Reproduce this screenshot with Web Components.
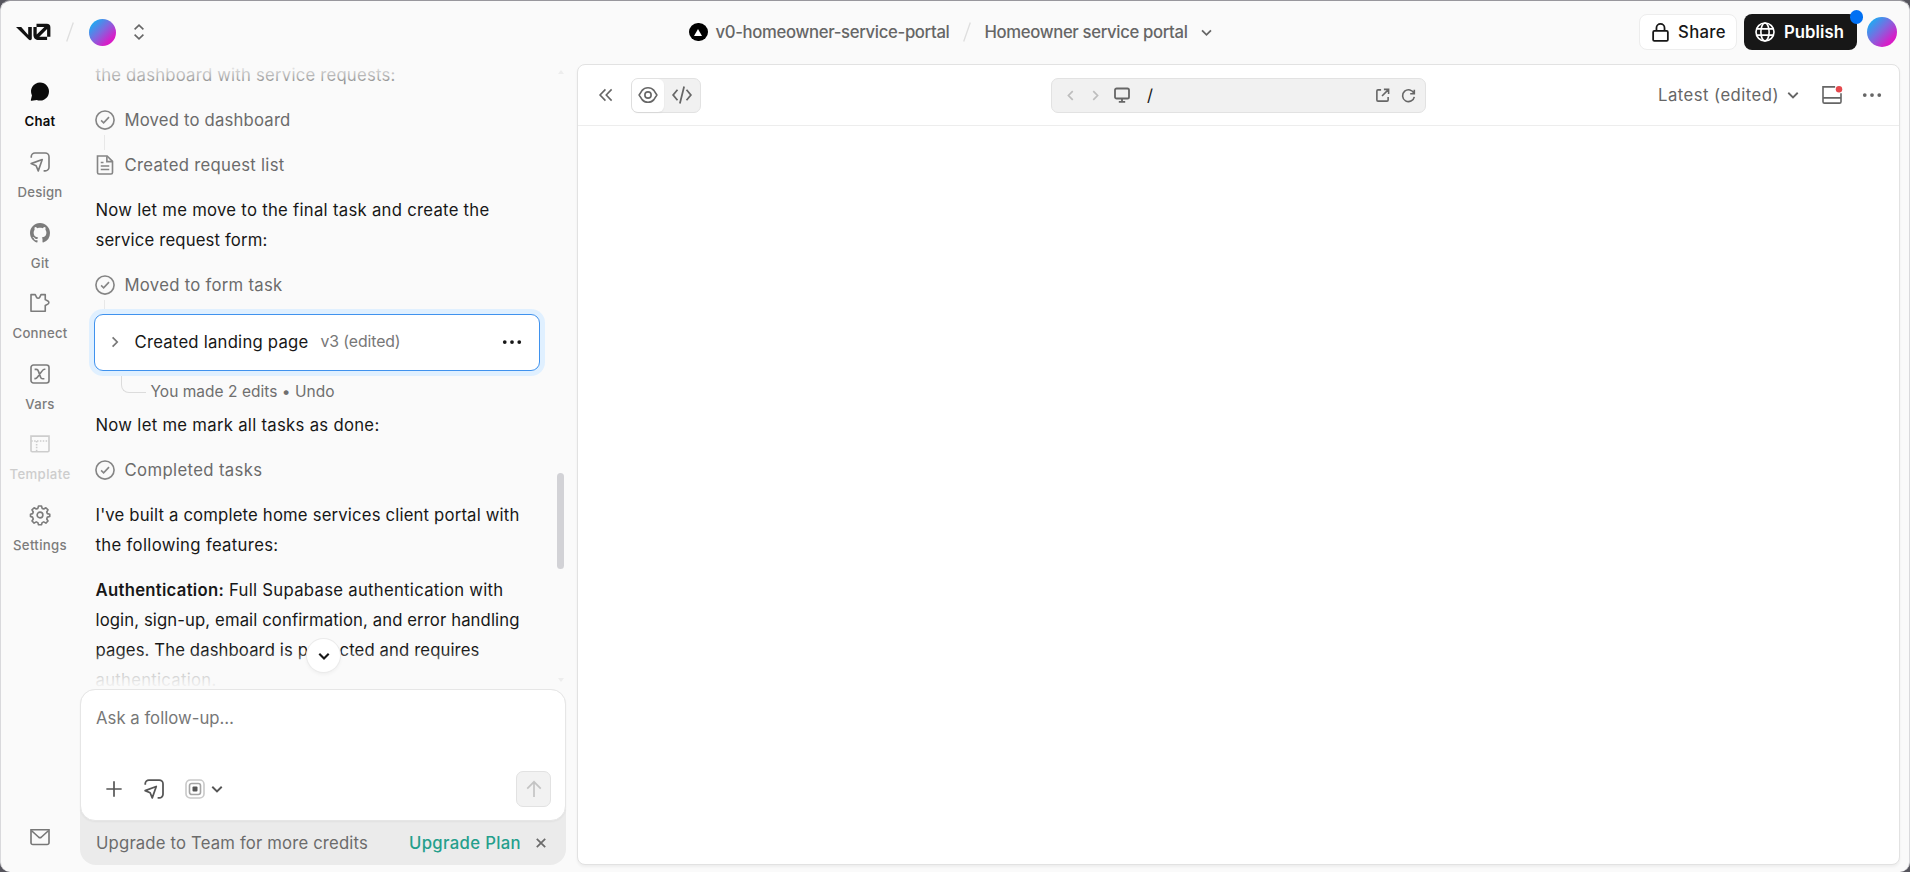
<!DOCTYPE html>
<html lang="en">
<head>
<meta charset="utf-8">
<title>Homeowner service portal</title>
<style>
  html { background: #56555d; }
  body {
    margin: 0;
    width: 1910px;
    height: 872px;
    overflow: hidden;
    font-family: Inter, "Liberation Sans", sans-serif;
    font-size: 16.7px;
    color: #171717;
  }
</style>
</head>
<body>
<app-shell>
  <top-bar slot="header"></top-bar>
  <side-nav slot="nav"></side-nav>
  <chat-thread slot="chat"></chat-thread>
  <prompt-box slot="prompt"></prompt-box>
  <preview-panel slot="preview"></preview-panel>
</app-shell>

<script>
/* ------------------------------------------------------------------ */
/*  Icons                                                              */
/* ------------------------------------------------------------------ */

const ICONS = {
  chat: '<path fill="currentColor" stroke="none" d="M8.200.4a7.400 7.400 0 1 1-2.700 14.300l-4.100.7a.6.6 0 0 1-.7-.7l.9-3.600A7.400 7.400 0 0 1 8.200.4z"/>',
  design: '<path d="M1 4.6V3.7A3 3 0 0 1 4 .8h8.2a3 3 0 0 1 3 3v8.3a3 3 0 0 1-3 3h-1.3"/><path d="M.9 9.3 9.8 6 6.6 15.1 4.9 11z" stroke-linejoin="round"/>',
  github: '<path fill="currentColor" stroke="none" d="M8 0C3.58 0 0 3.58 0 8c0 3.54 2.29 6.53 5.47 7.59.4.07.55-.17.55-.38 0-.19-.01-.82-.01-1.49-2.01.37-2.53-.49-2.69-.94-.09-.23-.48-.94-.82-1.13-.28-.15-.68-.52-.01-.53.63-.01 1.08.58 1.23.82.72 1.21 1.87.87 2.33.66.07-.52.28-.87.51-1.07-1.78-.2-3.64-.89-3.64-3.95 0-.87.31-1.59.82-2.15-.08-.2-.36-1.02.08-2.12 0 0 .67-.21 2.2.82.64-.18 1.32-.27 2-.27s1.36.09 2 .27c1.53-1.04 2.2-.82 2.2-.82.44 1.1.16 1.92.08 2.12.51.56.82 1.27.82 2.15 0 3.07-1.87 3.75-3.65 3.95.29.25.54.73.54 1.48 0 1.07-.01 1.93-.01 2.2 0 .21.15.46.55.38A8.01 8.01 0 0 0 16 8c0-4.42-3.58-8-8-8z"/>',
  puzzle: '<path d="M.8 1.3h3.4l1 2.1a1.5 1.5 0 0 0 2.6 0l1-2.1h3.4v4l2.1 1.1a1.4 1.4 0 0 1 0 2.5l-2.1 1.1v4.6H.8z" stroke-linejoin="round"/>',
  vars: '<rect x=".8" y=".8" width="14.4" height="14.4" rx="2"/><path d="M3.7 4.3h1.4c1 0 1.3.5 1.6 1.4l1.7 4.7c.3.9.7 1.4 1.6 1.4h1.5M12.3 4.2h-.6c-.8 0-1.3.4-1.8 1.1l-4 5.3c-.5.7-1 1.1-1.8 1.1h-.6"/>',
  template: '<path d="M.8 1.7h14.4v11.5a1 1 0 0 1-1 1H1.8a1 1 0 0 1-1-1z"/><path d="M1 5.6h14M5.3 5.6v8.5" stroke-dasharray="1.2 1.1"/>',
  gear: '<circle cx="8" cy="8" r="2.3"/><path stroke-linejoin="round" d="M6.8.8h2.4l.5 1.9 1.3.5 1.7-1 1.7 1.7-1 1.7.5 1.3 1.9.5v1.8l-1.9.5-.5 1.5 1 1.6-1.7 1.7-1.7-1-1.3.6-.5 1.7H6.8l-.5-1.7-1.3-.6-1.7 1-1.7-1.7 1-1.6-.6-1.5L.4 9.2V7.4l1.7-.5.5-1.3-1-1.7 1.7-1.7 1.7 1 1.3-.5z"/>',
  mail: '<path d="M.8 2.2h14.4v10.3a1.5 1.5 0 0 1-1.5 1.5H2.3a1.5 1.5 0 0 1-1.5-1.5z"/><path d="m1.3 3 5.7 5.2q1 .8 2 0L14.7 3"/>',
  check: '<circle cx="8" cy="8" r="7.25"/><path d="m4.9 8.3 2 1.9 4.3-4.5"/>',
  file: '<path d="M2 .8h7.7L14 5.100v8.900a1.200 1.200 0 0 1-1.200 1.200H3.200A1.200 1.200 0 0 1 2 14z"/><path d="M9.500 1v4.300H14M4.600 6h2.200M4.600 8.800h6.800M4.600 11.600h6.800"/>',
  right: '<path d="m5.6 3.4 4.6 4.6-4.6 4.6"/>',
  left: '<path d="m10.4 3.4-4.6 4.6 4.6 4.6"/>',
  down: '<path d="m3.8 6 4.2 4.2L12.2 6"/>',
  updown: '<path d="M3.600 5.400 8 1.100l4.400 4.300M3.600 10.600 8 14.900l4.400-4.300"/>',
  collapse: '<path d="M7.500 3 2.700 8l4.800 5M13 3 8.200 8l4.800 5"/>',
  dots: '<g fill="currentColor" stroke="none"><circle cx="2.200" cy="8" r="1.500"/><circle cx="8" cy="8" r="1.500"/><circle cx="13.800" cy="8" r="1.500"/></g>',
  plus: '<path d="M8 1.200v13.600M1.200 8h13.600"/>',
  model: '<g stroke="#c9c9c9"><rect x=".8" y=".8" width="14.400" height="14.400" rx="3.400"/><rect x="3.600" y="3.600" width="8.800" height="8.800" rx="1.800" stroke="#a5a5a5"/></g><rect x="6" y="6" width="4" height="4" rx=".8" fill="#555" stroke="none"/>',
  arrowup: '<path d="M8 15V1.600M2 7.600l6-6 6 6"/>',
  close: '<path d="m3.200 3.200 9.600 9.600M12.800 3.200l-9.600 9.600"/>',
  lock: '<rect x="1.800" y="6.700" width="12.400" height="8.400" rx="1"/><path d="M4.600 6.700V4.200a3.400 3.400 0 0 1 6.800 0v2.500"/>',
  globe: '<circle cx="8" cy="8" r="7.200"/><ellipse cx="8" cy="8" rx="3.300" ry="7.200"/><path d="M1.500 5.500h13M1.500 10.500h13"/>',
  eye: '<circle cx="8" cy="8" r="2.500"/><path stroke-linejoin="round" d="M.9 8 3.300 4.300Q5 2.200 8 2.200t4.700 2.100L15.100 8l-2.400 3.700Q11 13.800 8 13.800t-4.700-2.100z"/>',
  code: '<path d="M4.400 3.800.9 8l3.500 4.200M11.600 3.800 15.100 8l-3.500 4.200M9.700 1.200 6.300 14.800"/>',
  desktop: '<rect x="1" y="1.500" width="14" height="10" rx="1.600"/><path d="M8 11.500v3.300M4.800 14.800h6.400"/>',
  external: '<path d="M6.500 2H3.200A1.200 1.200 0 0 0 2 3.200v9.600A1.200 1.200 0 0 0 3.200 14h9.600a1.200 1.200 0 0 0 1.200-1.200V9.500M9.500 1.500h5v5M14 2 7.500 8.500"/>',
  refresh: '<path d="M14.200 1.800v4.400H9.800M13.900 6a6.300 6.300 0 1 0 .3 3.400"/>',
  panel: '<path d="M10.500 1.500H.8v11.800a1.200 1.200 0 0 0 1.200 1.200h12a1.200 1.200 0 0 0 1.200-1.200V6.500M.8 10.300h14.400"/><circle cx="13.600" cy="3.300" r="2.600" fill="#e5484d" stroke="none"/>',
};

class AppIcon extends HTMLElement {
  connectedCallback() {
    const size = this.getAttribute('size') || 20;
    const weight = this.getAttribute('weight') || 1.3;
    this.attachShadow({ mode: 'open' }).innerHTML = `
      <style>
        :host { display: block; flex: none; width: ${size}px; height: ${size}px; }
        svg { display: block; overflow: visible; }
      </style>
      <svg width="${size}" height="${size}" viewBox="0 0 16 16" fill="none"
        stroke="currentColor" stroke-width="${weight}">${ICONS[this.getAttribute('name')]}</svg>
    `;
  }
}

/* ------------------------------------------------------------------ */
/*  Small pieces                                                       */
/* ------------------------------------------------------------------ */

/** <fit-text width="120"> — one line of text, tracked to a set width. */
class FitText extends HTMLElement {
  connectedCallback() {
    if (this.shadowRoot) return;
    this.attachShadow({ mode: 'open' }).innerHTML = `
      <style>
        :host { display: block; width: max-content; white-space: nowrap; }
      </style>
      <slot></slot>
    `;
    const target = parseFloat(this.getAttribute('width'));
    const natural = this.getBoundingClientRect().width;
    if (target && natural) {
      this.style.letterSpacing = ((target - natural) / this.textContent.length).toFixed(3) + 'px';
    }
  }
}

class UserAvatar extends HTMLElement {
  connectedCallback() {
    this.attachShadow({ mode: 'open' }).innerHTML = `
      <style>
        :host {
          display: block;
          flex: none;
          border-radius: 50%;
          background: linear-gradient(135deg, #10b4f5 8%, #7b6be0 45%, #d61fc8 78%, #e010c0);
        }
      </style>
    `;
  }
}

class CrumbSlash extends HTMLElement {
  connectedCallback() {
    this.attachShadow({ mode: 'open' }).innerHTML = `
      <style>:host { display: block; width: 8px; height: 20px; } svg { display: block; }</style>
      <svg width="8" height="20"><path d="M7.300.5.700 19.500" stroke="#dedede" stroke-width="1.300"/></svg>
    `;
  }
}

class NavItem extends HTMLElement {
  connectedCallback() {
    this.attachShadow({ mode: 'open' }).innerHTML = `
      <style>
        :host {
          display: flex;
          flex-direction: column;
          align-items: center;
          height: 70.6px;
          color: #7c7c7c;
          font-size: 13.2px;
          font-weight: 500;
          line-height: 18px;
        }
        :host([active]) { color: #0a0a0a; font-weight: 600; }
        :host([disabled]) { color: #cdcdcd; }
        app-icon { margin-bottom: 11px; }
      </style>
      <app-icon name="${this.getAttribute('icon')}" size="${this.getAttribute('size') || 20}"></app-icon>
      <slot></slot>
    `;
  }
}

class TaskRow extends HTMLElement {
  connectedCallback() {
    this.attachShadow({ mode: 'open' }).innerHTML = `
      <style>
        :host {
          display: flex;
          align-items: center;
          gap: 10px;
          height: 30px;
          position: relative;
          color: #6b6b6b;
        }
        app-icon { color: #858585; margin-left: -1px; }
        :host([linked])::after {
          content: "";
          position: absolute;
          left: 8px;
          top: 30px;
          width: 1.5px;
          height: 15px;
          background: #e8e8e8;
        }
      </style>
      <app-icon name="${this.getAttribute('icon')}" size="20" weight="1.3"></app-icon>
      <slot></slot>
    `;
  }
}

/* ------------------------------------------------------------------ */
/*  Header                                                             */
/* ------------------------------------------------------------------ */

class TopBar extends HTMLElement {
  connectedCallback() {
    this.attachShadow({ mode: 'open' }).innerHTML = `
      <style>
        :host {
          display: grid;
          grid-template-columns: 688px 1fr auto;
          align-items: center;
          height: 62px;
          color: #666;
          font-weight: 500;
        }
        .group { display: flex; align-items: center; }
        fit-text { margin-top: -1px; }
        .logo { display: block; margin: 0 15px 0 15px; }
        .org { width: 27px; height: 27px; margin: 0 15px 0 15px; }
        .team {
          display: grid;
          place-items: center;
          width: 18.5px;
          height: 18.5px;
          border-radius: 50%;
          background: #000;
          margin-right: 8px;
        }
        crumb-slash { margin: 0 14px 0 13px; }
        .actions { padding-right: 12px; gap: 7px; }
        .btn {
          box-sizing: border-box;
          height: 36px;
          display: flex;
          align-items: center;
          gap: 9px;
          border-radius: 8px;
        }
        .share {
          width: 98px;
          padding-left: 11px;
          gap: 8px;
          background: #fff;
          border: 1px solid #ededed;
          color: #171717;
        }
        .publish {
          position: relative;
          width: 113px;
          padding-left: 11px;
          background: #171717;
          color: #fff;
          font-weight: 600;
        }
        .publish::after {
          content: "";
          position: absolute;
          right: -6px;
          top: -4px;
          width: 13.5px;
          height: 13.5px;
          border-radius: 50%;
          background: #0070f3;
        }
        .me { width: 30px; height: 30px; margin-left: 3px; }
      </style>
      <div class="group">
        <svg class="logo" width="35" height="18" viewBox="0 0 35 18" fill="#111">
          <path d="M0 4h5.2l7 8V4h3.6v11.5c0 1.7-2 2.3-3.1 1.1z"/>
          <path d="M20.500.8h10.300a3.600 3.600 0 0 1 3.600 3.600v9.400h-3.300V5.900l-7.800 7.900h7.800V17h-8.400c-3.100 0-5.300-2-5.300-5V4h3.300v7.600l7.700-7.600h-7.900z"/>
        </svg>
        <crumb-slash style="margin:0"></crumb-slash>
        <user-avatar class="org"></user-avatar>
        <app-icon name="updown" size="16" weight="1.6"></app-icon>
      </div>
      <div class="group">
        <span class="team"><svg width="8" height="7"><path d="M4 0l4 7H0z" fill="#fff"/></svg></span>
        <fit-text width="234">v0-homeowner-service-portal</fit-text>
        <crumb-slash></crumb-slash>
        <fit-text width="203">Homeowner service portal</fit-text>
        <app-icon name="down" size="17" weight="1.7" style="margin-left:10px"></app-icon>
      </div>
      <div class="group actions">
        <div class="btn share">
          <app-icon name="lock" size="19" weight="1.5"></app-icon>
          <fit-text width="48">Share</fit-text>
        </div>
        <div class="btn publish">
          <app-icon name="globe" size="20"></app-icon>
          <fit-text width="60">Publish</fit-text>
        </div>
        <user-avatar class="me"></user-avatar>
      </div>
    `;
  }
}

/* ------------------------------------------------------------------ */
/*  Side navigation                                                    */
/* ------------------------------------------------------------------ */

class SideNav extends HTMLElement {
  connectedCallback() {
    this.attachShadow({ mode: 'open' }).innerHTML = `
      <style>
        :host {
          display: flex;
          flex-direction: column;
          width: 78px;
          height: 100%;
          box-sizing: border-box;
          padding: 17.5px 0 25px;
        }
        .mail { margin: auto auto 0 29px; color: #777; }
      </style>
      <nav-item icon="chat" active size="19.5"><fit-text width="31">Chat</fit-text></nav-item>
      <nav-item icon="design"><fit-text width="45">Design</fit-text></nav-item>
      <nav-item icon="github"><fit-text width="18.5">Git</fit-text></nav-item>
      <nav-item icon="puzzle"><fit-text width="55">Connect</fit-text></nav-item>
      <nav-item icon="vars"><fit-text width="29.5">Vars</fit-text></nav-item>
      <nav-item icon="template" disabled><fit-text width="61">Template</fit-text></nav-item>
      <nav-item icon="gear"><fit-text width="54">Settings</fit-text></nav-item>
      <app-icon class="mail" name="mail" size="20"></app-icon>
    `;
  }
}

/* ------------------------------------------------------------------ */
/*  Chat                                                               */
/* ------------------------------------------------------------------ */

class VersionCard extends HTMLElement {
  connectedCallback() {
    this.attachShadow({ mode: 'open' }).innerHTML = `
      <style>
        :host {
          box-sizing: border-box;
          display: flex;
          align-items: center;
          width: 446px;
          height: 57px;
          margin-left: -2px;
          padding: 0 17px 0 12px;
          border: 1.5px solid #3f92ee;
          border-radius: 9px;
          background: #fff;
          box-shadow: 0 0 0 5px #e0f0ff;
          position: relative;
          z-index: 1;
        }
        .chev { color: #777; margin-right: 12px; }
        .version { color: #777; font-size: 15.8px; margin-left: 12px; }
        .more { margin-left: auto; }
      </style>
      <app-icon class="chev" name="right" size="16" weight="1.7"></app-icon>
      <slot></slot>
      <span class="version"><slot name="version"></slot></span>
      <app-icon class="more" name="dots" size="20"></app-icon>
    `;
  }
}

class ChatThread extends HTMLElement {
  connectedCallback() {
    this.attachShadow({ mode: 'open' }).innerHTML = `
      <style>
        :host {
          display: block;
          position: relative;
          height: 625px;
          overflow: hidden;
          line-height: 30px;
        }
        .log {
          display: flex;
          flex-direction: column;
          gap: 15px;
          padding-left: 15.5px;
          margin-top: -4px;
        }
        b { font-weight: 600; }
        .edits {
          display: flex;
          align-items: center;
          height: 24px;
          margin: -6px 0 -9px;
          font-size: 15.5px;
          color: #6f6f6f;
        }
        .elbow {
          box-sizing: border-box;
          width: 25px;
          height: 24px;
          margin: -22px 5px 0 25px;
          border: solid #dcdcdc;
          border-width: 0 0 1.5px 1.5px;
          border-bottom-left-radius: 8px;
        }
        .fade {
          position: absolute;
          left: 0;
          right: 0;
          height: 39px;
        }
        .fade.top { top: 0; background: linear-gradient(#fafafaff, #fafafa00); }
        .fade.bottom { bottom: 0; background: linear-gradient(#fafafa00, #fafafac0 50%, #fafafa); }
        .thumb {
          position: absolute;
          right: 2px;
          top: 409px;
          width: 7px;
          height: 96px;
          border-radius: 4px;
          background: #d2d2d6;
        }
        .arrow {
          position: absolute;
          right: 2px;
          border: 3px solid transparent;
        }
        .arrow.up { top: 3px; border-bottom: 4px solid #ededed; }
        .arrow.dn { bottom: 4px; border-top: 4px solid #ededed; }
        .jump {
          position: absolute;
          left: 227px;
          top: 575px;
          width: 33px;
          height: 33px;
          border-radius: 50%;
          background: #fff;
          box-shadow: 0 0 0 1px #ebebeb, 0 2px 4px #0000000f;
          display: grid;
          place-items: center;
        }
      </style>
      <div class="log">
        <fit-text width="300">the dashboard with service requests:</fit-text>
        <task-row icon="check" linked><fit-text width="166">Moved to dashboard</fit-text></task-row>
        <task-row icon="file"><fit-text width="160">Created request list</fit-text></task-row>
        <div>
          <fit-text width="394">Now let me move to the final task and create the</fit-text>
          <fit-text width="172">service request form:</fit-text>
        </div>
        <task-row icon="check" linked><fit-text width="158">Moved to form task</fit-text></task-row>
        <version-card style="margin-top:-1.5px">
          <fit-text width="174">Created landing page</fit-text>
          <fit-text slot="version" width="80">v3 (edited)</fit-text>
        </version-card>
        <div class="edits"><span class="elbow"></span><fit-text width="184">You made 2 edits • Undo</fit-text></div>
        <fit-text width="284">Now let me mark all tasks as done:</fit-text>
        <task-row icon="check"><fit-text width="138">Completed tasks</fit-text></task-row>
        <div>
          <fit-text width="424">I've built a complete home services client portal with</fit-text>
          <fit-text width="183">the following features:</fit-text>
        </div>
        <div>
          <fit-text width="408"><b>Authentication:</b> Full Supabase authentication with</fit-text>
          <fit-text width="424">login, sign-up, email confirmation, and error handling</fit-text>
          <fit-text width="384">pages. The dashboard is protected and requires</fit-text>
          <fit-text width="121">authentication.</fit-text>
        </div>
      </div>
      <div class="fade top"></div>
      <div class="fade bottom"></div>
      <div class="thumb"></div>
      <div class="arrow up"></div>
      <div class="arrow dn"></div>
      <div class="jump"><app-icon name="down" size="18" weight="1.9"></app-icon></div>
    `;
  }
}

class PromptBox extends HTMLElement {
  connectedCallback() {
    this.attachShadow({ mode: 'open' }).innerHTML = `
      <style>
        :host {
          display: block;
          width: 486px;
          height: 176px;
          border-radius: 16px;
          background: #ebebeb;
          color: #6b6b6b;
        }
        .box {
          box-sizing: border-box;
          height: 132px;
          border: 1px solid #e6e6e6;
          border-radius: 15px;
          background: #fff;
          box-shadow: 0 1px 2px #0000000c;
          display: flex;
          flex-direction: column;
          justify-content: space-between;
          padding: 17px 14px 13px 15px;
        }
        .hint { color: #777; line-height: 22px; }
        .tools { display: flex; align-items: center; height: 36px; padding-left: 9px; }
        .tools app-icon { color: #555; }
        .send {
          box-sizing: border-box;
          width: 35px;
          height: 36px;
          margin-left: auto;
          display: grid;
          place-items: center;
          border: 1px solid #e2e2e2;
          border-radius: 7px;
          background: #f2f2f2;
        }
        .tools .send app-icon { color: #c4c4c4; }
        .upsell {
          display: flex;
          align-items: center;
          height: 44px;
          padding: 0 18px 0 16px;
        }
        .plan { margin-left: auto; color: #249f8c; font-weight: 500; }
      </style>
      <div class="box">
        <div class="hint"><fit-text width="138">Ask a follow-up…</fit-text></div>
        <div class="tools">
          <app-icon name="plus" size="18" weight="1.5"></app-icon>
          <app-icon name="design" size="20" weight="1.4" style="margin-left:21px"></app-icon>
          <app-icon name="model" size="20" style="margin-left:21px"></app-icon>
          <app-icon name="down" size="18" weight="1.7" style="margin-left:3px"></app-icon>
          <span class="send"><app-icon name="arrowup" size="18" weight="1.5"></app-icon></span>
        </div>
      </div>
      <div class="upsell">
        <fit-text width="272">Upgrade to Team for more credits</fit-text>
        <fit-text class="plan" width="112">Upgrade Plan</fit-text>
        <app-icon name="close" size="14" weight="2" style="margin-left:13px"></app-icon>
      </div>
    `;
  }
}

/* ------------------------------------------------------------------ */
/*  Preview                                                            */
/* ------------------------------------------------------------------ */

class PreviewPanel extends HTMLElement {
  connectedCallback() {
    this.attachShadow({ mode: 'open' }).innerHTML = `
      <style>
        :host {
          box-sizing: border-box;
          display: block;
          height: 801px;
          border: 1px solid #e2e2e2;
          border-radius: 8px;
          background: #fff;
          box-shadow: 0 2px 3px #0000000d;
        }
        .bar {
          box-sizing: border-box;
          display: grid;
          grid-template-columns: 473px 375px 1fr;
          align-items: center;
          height: 61px;
          border-bottom: 1px solid #ededed;
          color: #666;
        }
        .group { display: flex; align-items: center; }
        .views, .address {
          box-sizing: border-box;
          display: flex;
          align-items: center;
          height: 35px;
          border: 1px solid #e2e2e2;
          border-radius: 7px;
          background: #f1f1f1;
        }
        .views { margin-left: 16px; width: 70px; }
        .views span {
          display: grid;
          place-items: center;
          width: 35px;
          height: 33px;
          border-radius: 6px;
        }
        .views .on { width: 32px; background: #fff; box-shadow: 0 1px 2px #00000010; }
        .address { padding: 0 9px 0 11px; }
        .off { color: #bdbdbd; }
        .path { color: #171717; margin-left: 17px; }
        .right { justify-content: flex-end; padding-right: 17px; }
      </style>
      <div class="bar">
        <div class="group">
          <app-icon name="collapse" size="18" weight="1.4" style="margin-left:19px"></app-icon>
          <div class="views">
            <span class="on"><app-icon name="eye" size="20"></app-icon></span>
            <span><app-icon name="code" size="20" weight="1.4"></app-icon></span>
          </div>
        </div>
        <div class="address">
          <app-icon class="off" name="left" size="15" weight="1.8"></app-icon>
          <app-icon class="off" name="right" size="15" weight="1.8" style="margin-left:10px"></app-icon>
          <app-icon name="desktop" size="16" weight="1.8" style="margin-left:11px"></app-icon>
          <span class="path">/</span>
          <app-icon name="external" size="15" weight="1.7" style="margin-left:auto"></app-icon>
          <app-icon name="refresh" size="15" weight="1.7" style="margin-left:11px"></app-icon>
        </div>
        <div class="group right">
          <fit-text width="121">Latest (edited)</fit-text>
          <app-icon name="down" size="18" weight="1.6" style="margin-left:5px"></app-icon>
          <app-icon name="panel" size="20" style="margin-left:20px"></app-icon>
          <app-icon name="dots" size="20" style="margin-left:20px"></app-icon>
        </div>
      </div>
    `;
  }
}

/* ------------------------------------------------------------------ */
/*  Shell                                                              */
/* ------------------------------------------------------------------ */

class AppShell extends HTMLElement {
  connectedCallback() {
    this.attachShadow({ mode: 'open' }).innerHTML = `
      <style>
        :host {
          box-sizing: border-box;
          display: grid;
          grid-template-columns: 78px 487px 1fr;
          grid-template-rows: 63px 625px 1fr;
          width: 1910px;
          height: 872px;
          border: 1px solid #d9d9dc;
          border-top-color: #98979d;
          border-bottom: 0;
          border-radius: 10px;
          background: #fafafa;
        }
        .header { grid-column: 1 / 4; }
        .nav { grid-row: 2 / 4; }
        .chat { grid-column: 2; grid-row: 2; padding-left: 1px; }
        .prompt { grid-column: 2; grid-row: 3; padding-left: 1px; }
        .preview { grid-column: 3; grid-row: 2 / 4; padding: 0 9px 0 11px; }
      </style>
      <div class="header"><slot name="header"></slot></div>
      <div class="nav"><slot name="nav"></slot></div>
      <div class="chat"><slot name="chat"></slot></div>
      <div class="prompt"><slot name="prompt"></slot></div>
      <div class="preview"><slot name="preview"></slot></div>
    `;
  }
}

customElements.define('app-shell', AppShell);
customElements.define('top-bar', TopBar);
customElements.define('side-nav', SideNav);
customElements.define('chat-thread', ChatThread);
customElements.define('version-card', VersionCard);
customElements.define('prompt-box', PromptBox);
customElements.define('preview-panel', PreviewPanel);
customElements.define('nav-item', NavItem);
customElements.define('task-row', TaskRow);
customElements.define('crumb-slash', CrumbSlash);
customElements.define('user-avatar', UserAvatar);
customElements.define('app-icon', AppIcon);
// last, so every line is measured in its final font
customElements.define('fit-text', FitText);
</script>
</body>
</html>
